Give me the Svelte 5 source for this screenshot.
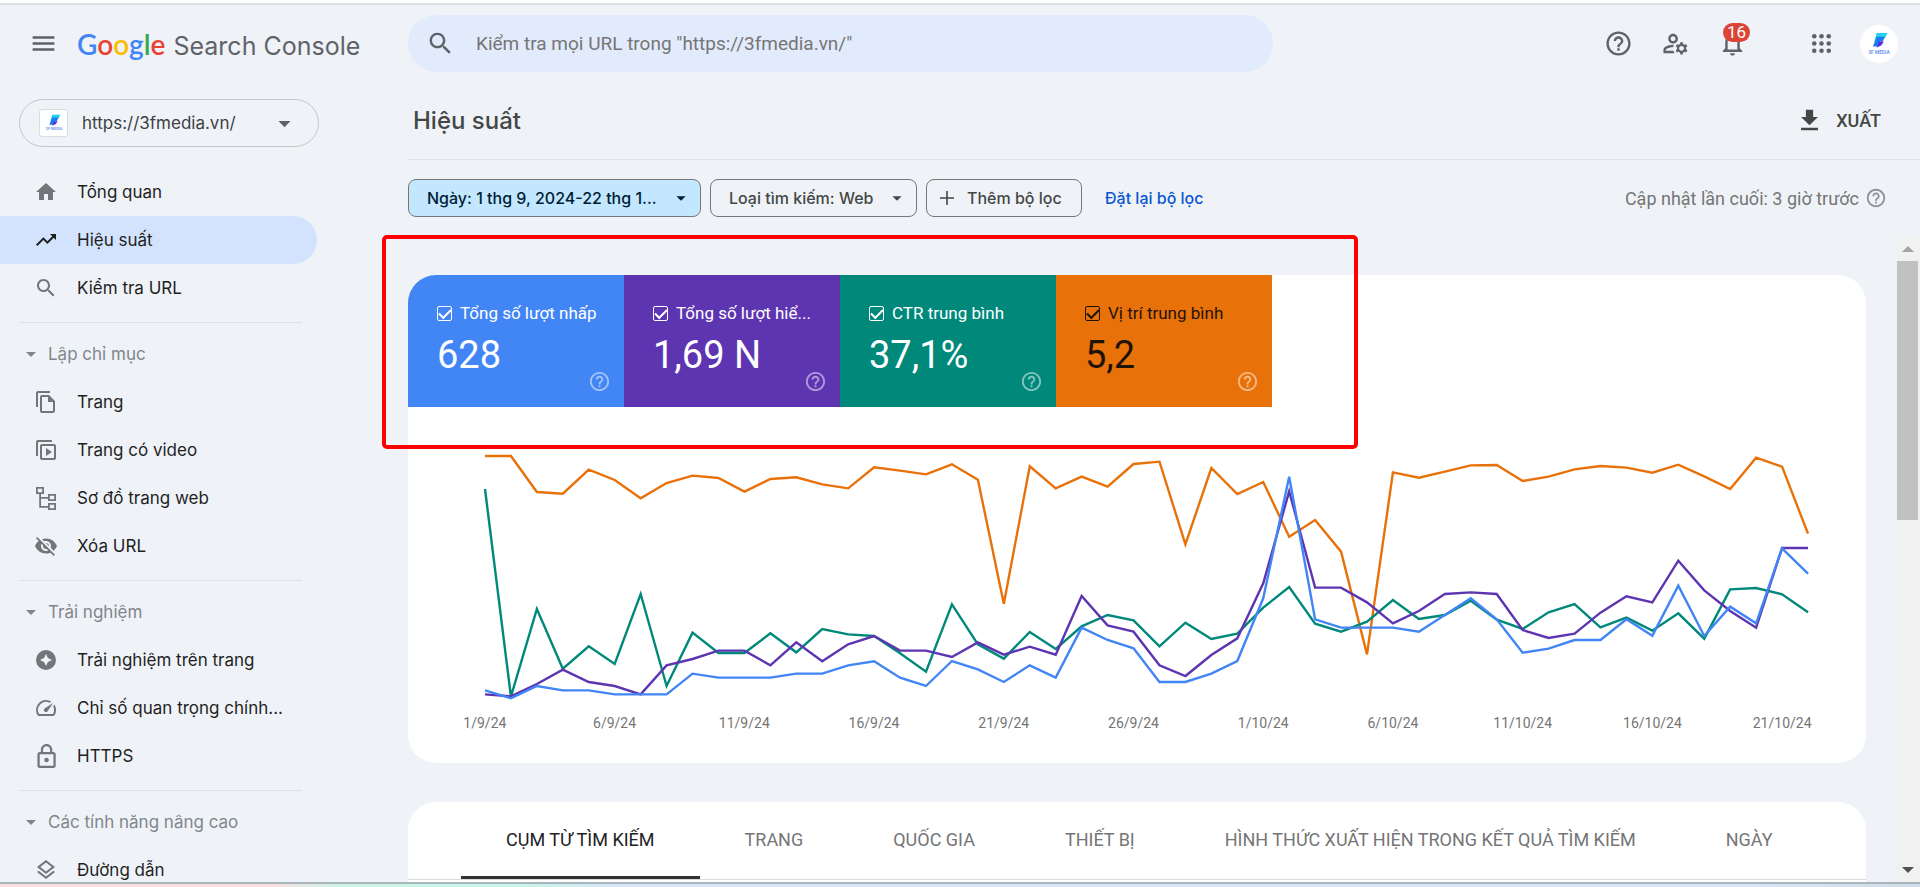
<script lang="ts">
	interface NavItem {
		label: string;
		icon: string;
		box?: string;
		active?: boolean;
	}
	interface NavGroup {
		title?: string;
		items: NavItem[];
	}

	const icons: Record<string, string> = {
		menu: 'M3 18h18v-2H3v2zm0-5h18v-2H3v2zm0-7v2h18V6H3z',
		search:
			'M15.5 14h-.79l-.28-.27C15.41 12.59 16 11.11 16 9.5 16 5.91 13.09 3 9.5 3S3 5.91 3 9.5 5.91 16 9.5 16c1.61 0 3.09-.59 4.23-1.57l.27.28v.79l5 4.99L20.49 19l-4.99-5zm-6 0C7.01 14 5 11.99 5 9.5S7.01 5 9.5 5 14 7.01 14 9.5 11.99 14 9.5 14z',
		help: 'M11 18h2v-2h-2v2zm1-16C6.48 2 2 6.48 2 12s4.48 10 10 10 10-4.48 10-10S17.52 2 12 2zm0 18c-4.41 0-8-3.59-8-8s3.59-8 8-8 8 3.59 8 8-3.59 8-8 8zm0-14c-2.21 0-4 1.79-4 4h2c0-1.1.9-2 2-2s2 .9 2 2c0 2-3 1.75-3 5h2c0-2.25 3-2.5 3-5 0-2.21-1.79-4-4-4z',
		accounts:
			'M4 18v-.65c0-.34.16-.66.41-.81C6.1 15.53 8.03 15 10 15c.03 0 .05 0 .08.01.1-.7.3-1.37.59-1.98-.22-.02-.44-.03-.67-.03-2.42 0-4.68.67-6.61 1.82-.88.52-1.39 1.5-1.39 2.53V20h9.26c-.42-.6-.75-1.28-.97-2H4zm6-6c2.21 0 4-1.79 4-4s-1.79-4-4-4-4 1.79-4 4 1.79 4 4 4zm0-6c1.1 0 2 .9 2 2s-.9 2-2 2-2-.9-2-2 .9-2 2-2zm10.75 10c0-.22-.03-.42-.06-.63l1.14-1.01-1-1.73-1.45.49c-.32-.27-.68-.48-1.08-.63L18 11h-2l-.3 1.49c-.4.15-.76.36-1.08.63l-1.45-.49-1 1.73 1.14 1.01c-.03.21-.06.41-.06.63s.03.42.06.63l-1.14 1.01 1 1.73 1.45-.49c.32.27.68.48 1.08.63L16 21h2l.3-1.49c.4-.15.76-.36 1.08-.63l1.45.49 1-1.73-1.14-1.01c.03-.21.06-.41.06-.63zM17 18c-1.1 0-2-.9-2-2s.9-2 2-2 2 .9 2 2-.9 2-2 2z',
		bell: 'M12 22c1.1 0 2-.9 2-2h-4c0 1.1.9 2 2 2zm6-6v-5c0-3.07-1.63-5.64-4.5-6.32V4c0-.83-.67-1.5-1.5-1.5s-1.5.67-1.5 1.5v.68C7.64 5.36 6 7.92 6 11v5l-2 2v1h16v-1l-2-2zm-2 1H8v-6c0-2.48 1.51-4.5 4-4.5s4 2.02 4 4.5v6z',
		download: 'M19 9h-4V3H9v6H5l7 7 7-7zM5 18v2h14v-2H5z',
		plus: 'M19 12.8h-6.2V19h-1.6v-6.2H5v-1.6h6.2V5h1.6v6.2H19z',
		caret: 'M7 10l5 5 5-5z',
		home: 'M10 20v-6h4v6h5v-8h3L12 3 2 12h3v8z',
		trend: 'M16 6l2.29 2.29-4.88 4.88-4-4L2 16.59 3.41 18l6-6 4 4 6.3-6.29L22 12V6z',
		pages:
			'M16 1H4c-1.1 0-2 .9-2 2v14h2V3h12zM15 5l6 6v10c0 1.1-.9 2-2 2H8c-1.1 0-2-.9-2-2V7c0-1.1.9-2 2-2zM8 7v14h11v-9h-5V7z',
		video:
			'M4 18H2V4c0-1.1.9-2 2-2h14v2H4zM20 6H8c-1.1 0-2 .9-2 2v12c0 1.1.9 2 2 2h12c1.1 0 2-.9 2-2V8c0-1.1-.9-2-2-2zm0 14H8V8h12zM12 10v8l6-4z',
		sitemap:
			'M2 1h8v7H7v3h7V8h8v7h-8v-2.2H7V20h7v-3h8v7h-8v-2.2H5.2V8H2zM3.8 2.8v3.4h4.4V2.8zM15.8 9.8v3.4h4.4V9.8zM15.8 18.8v3.4h4.4v-3.4z',
		hidden:
			'M12 7c2.76 0 5 2.24 5 5 0 .65-.13 1.26-.36 1.83l2.92 2.92c1.51-1.26 2.7-2.89 3.43-4.75-1.73-4.39-6-7.5-11-7.5-1.4 0-2.74.25-3.98.7l2.16 2.16C10.74 7.13 11.35 7 12 7zM2 4.27l2.28 2.28.46.46C3.08 8.3 1.78 10.02 1 12c1.73 4.39 6 7.5 11 7.5 1.55 0 3.03-.3 4.38-.84l.42.42L19.73 22 21 20.73 3.27 3 2 4.27zM7.53 9.8l1.55 1.55c-.05.21-.08.43-.08.65 0 1.66 1.34 3 3 3 .22 0 .44-.03.65-.08l1.55 1.55c-.67.33-1.41.53-2.2.53-2.76 0-5-2.24-5-5 0-.79.2-1.53.53-2.2zm4.31-.78l3.15 3.15.02-.16c0-1.66-1.34-3-3-3l-.17.01z',
		experience:
			'M12 2a10 10 0 1 0 0 20 10 10 0 0 0 0-20zm0 4l1.9 4.1L18 12l-4.1 1.9L12 18l-1.9-4.1L6 12l4.1-1.9z',
		speed:
			'M20.38 8.57l-1.23 1.85a8 8 0 0 1-.22 7.58H5.07A8 8 0 0 1 15.58 6.85l1.85-1.23A10 10 0 0 0 3.35 19a2 2 0 0 0 1.72 1h13.85a2 2 0 0 0 1.74-1 10 10 0 0 0-.27-10.44zm-9.79 6.84a2 2 0 0 0 2.83 0l5.66-8.49-8.49 5.66a2 2 0 0 0 0 2.83z',
		lock: 'M12 17c1.1 0 2-.9 2-2s-.9-2-2-2-2 .9-2 2 .9 2 2 2zm6-9h-1V6c0-2.76-2.24-5-5-5S7 3.24 7 6v2H6c-1.1 0-2 .9-2 2v10c0 1.1.9 2 2 2h12c1.1 0 2-.9 2-2V10c0-1.1-.9-2-2-2zM8.9 6c0-1.71 1.39-3.1 3.1-3.1s3.1 1.39 3.1 3.1v2H8.9V6zM18 20H6V10h12v10z',
		layers:
			'M11.99 18.54l-7.37-5.73L3 14.07l9 7 9-7-1.63-1.27zM12 16l7.36-5.73L21 9l-9-7-9 7 1.63 1.27L12 16zm0-11.47L17.74 9 12 13.47 6.26 9 12 4.53z'
	};

	const groups: NavGroup[] = [
		{
			items: [
				{ label: 'Tổng quan', icon: 'home' },
				{ label: 'Hiệu suất', icon: 'trend', active: true },
				{ label: 'Kiểm tra URL', icon: 'search' }
			]
		},
		{
			title: 'Lập chỉ mục',
			items: [
				{ label: 'Trang', icon: 'pages' },
				{ label: 'Trang có video', icon: 'video' },
				{ label: 'Sơ đồ trang web', icon: 'sitemap' },
				{ label: 'Xóa URL', icon: 'hidden' }
			]
		},
		{
			title: 'Trải nghiệm',
			items: [
				{ label: 'Trải nghiệm trên trang', icon: 'experience' },
				{ label: 'Chỉ số quan trọng chính...', icon: 'speed' },
				{ label: 'HTTPS', icon: 'lock', box: '1 1 21 21' }
			]
		},
		{
			title: 'Các tính năng nâng cao',
			items: [{ label: 'Đường dẫn', icon: 'layers' }]
		}
	];

	const metrics = [
		{ id: 'clicks', label: 'Tổng số lượt nhấp', value: '628' },
		{ id: 'impressions', label: 'Tổng số lượt hiể...', value: '1,69 N' },
		{ id: 'ctr', label: 'CTR trung bình', value: '37,1%' },
		{ id: 'position', label: 'Vị trí trung bình', value: '5,2' }
	];

	// one value per day, measured down from the top of the plot
	const series = [
		{
			id: 'position',
			values: [
				48, 48, 156, 161, 89, 120, 175, 129, 107, 114, 155, 117, 112, 133, 145, 82, 92, 103, 73, 119,
				491, 79, 145, 110, 140, 72, 65, 313, 84, 162, 126, 290, 240, 335, 643, 97, 113, 95, 76, 75,
				123, 110, 88, 78, 83, 98, 74, 109, 147, 53, 80, 281
			]
		},
		{
			id: 'ctr',
			values: [
				147, 770, 507, 686, 619, 672, 462, 738, 578, 639, 639, 580, 637, 567, 583, 588, 640, 695, 493,
				613, 656, 576, 627, 559, 525, 541, 619, 548, 597, 581, 503, 441, 551, 575, 545, 480, 537, 525,
				482, 539, 567, 517, 492, 562, 533, 572, 520, 596, 448, 444, 463, 517
			]
		},
		{
			id: 'impressions',
			values: [
				763, 769, 732, 689, 726, 738, 763, 676, 657, 632, 632, 676, 607, 664, 613, 588, 632, 632, 651,
				607, 644, 620, 644, 468, 556, 575, 676, 708, 645, 595, 430, 154, 443, 443, 487, 550, 513, 462,
				457, 462, 570, 594, 581, 518, 469, 487, 362, 451, 513, 563, 324, 324
			]
		},
		{
			id: 'clicks',
			values: [
				751, 775, 738, 751, 751, 763, 763, 763, 701, 713, 713, 713, 701, 701, 676, 664, 713, 738, 663,
				688, 726, 676, 713, 563, 600, 625, 726, 726, 701, 663, 475, 110, 538, 563, 563, 563, 575, 525,
				475, 538, 638, 626, 600, 600, 538, 587, 437, 588, 500, 550, 325, 401
			]
		}
	];

	const dates = [
		'1/9/24',
		'6/9/24',
		'11/9/24',
		'16/9/24',
		'21/9/24',
		'26/9/24',
		'1/10/24',
		'6/10/24',
		'11/10/24',
		'16/10/24',
		'21/10/24'
	];

	const tabs = [
		'CỤM TỪ TÌM KIẾM',
		'TRANG',
		'QUỐC GIA',
		'THIẾT BỊ',
		'HÌNH THỨC XUẤT HIỆN TRONG KẾT QUẢ TÌM KIẾM',
		'NGÀY'
	];
	let activeTab = $state(0);

	const toPoints = (values: number[]) => values.map((v, i) => `${i},${v}`).join(' ');
</script>

{#snippet icon(name: string, size: number, box = '0 0 24 24')}
	<svg class="icon" width={size} height={size} viewBox={box} aria-hidden="true">
		<path d={icons[name]} fill="currentColor" fill-rule="evenodd" />
	</svg>
{/snippet}

{#snippet brand(size: number)}
	<svg class="icon" width={size} height={size} viewBox="0 0 28 28" aria-hidden="true">
		<path d="M12 5h9l-2 4h-5l-4 4z" fill="#22d3ee" />
		<path d="M9 16l3-8h7l-2 4h-2l-2 4H9z" fill="#1d7bf0" />
		<path d="M14 12h4l-2 3-4 2z" fill="#5b2be0" />
		<text x="14" y="22" text-anchor="middle" class="brand-text">3F MEDIA</text>
	</svg>
{/snippet}

<div class="app">
	<header class="topbar">
		<div class="logo-area">
			<button class="icon-btn" aria-label="Menu">{@render icon('menu', 29)}</button>
			<a class="logo" href="#home">
				<span class="google"
					><span class="b">G</span><span class="r">o</span><span class="y">o</span><span class="b"
						>g</span
					><span class="g">l</span><span class="r">e</span></span
				>
				<span class="product">Search Console</span>
			</a>
		</div>
		<label class="search">
			{@render icon('search', 29)}
			<input
				type="text"
				aria-label="Kiểm tra URL"
				placeholder={'Kiểm tra mọi URL trong "https://3fmedia.vn/"'}
			/>
		</label>
		<div class="actions">
			<button class="icon-btn" aria-label="Trợ giúp">{@render icon('help', 29)}</button>
			<button class="icon-btn" aria-label="Người dùng">{@render icon('accounts', 29)}</button>
			<button class="icon-btn bell" aria-label="Thông báo">
				{@render icon('bell', 29)}
				<span class="badge">16</span>
			</button>
			<button class="icon-btn apps" aria-label="Ứng dụng">
				<svg class="icon" width="29" height="29" viewBox="0 0 24 24" aria-hidden="true">
					{#each [6, 12, 18] as cy}
						{#each [6, 12, 18] as cx}
							<circle {cx} {cy} r="1.9" fill="currentColor" />
						{/each}
					{/each}
				</svg>
			</button>
		</div>
		<button class="avatar" aria-label="Tài khoản">{@render brand(34)}</button>
	</header>

	<div class="body">
		<aside class="sidebar">
			<label class="property">
				<span class="favicon">{@render brand(26)}</span>
				<select aria-label="Trang web">
					<option>https://3fmedia.vn/</option>
				</select>
				{@render icon('caret', 29)}
			</label>
			<nav>
				{#each groups as group}
					{#if group.title}
						<hr />
						<button class="group-title">
							{@render icon('caret', 24)}
							{group.title}
						</button>
					{/if}
					{#each group.items as item}
						<a class="nav-item" class:active={item.active} href="#{item.icon}">
							{@render icon(item.icon, 24, item.box)}
							{item.label}
						</a>
					{/each}
				{/each}
			</nav>
		</aside>

		<main>
			<div class="title-row">
				<h1>Hiệu suất</h1>
				<button class="export">{@render icon('download', 29)}XUẤT</button>
			</div>

			<div class="filters">
				<label class="chip selected">
					<select aria-label="Ngày">
						<option>Ngày: 1 thg 9, 2024-22 thg 1...</option>
					</select>
					{@render icon('caret', 22)}
				</label>
				<label class="chip">
					<select aria-label="Loại tìm kiếm">
						<option>Loại tìm kiếm: Web</option>
					</select>
					{@render icon('caret', 22)}
				</label>
				<button class="chip add">{@render icon('plus', 24)}Thêm bộ lọc</button>
				<a class="reset" href="#reset">Đặt lại bộ lọc</a>
				<span class="updated">
					Cập nhật lần cuối: 3 giờ trước
					{@render icon('help', 22)}
				</span>
			</div>

			<div class="scroll">
				<div class="content">
					<section class="card performance">
						<div class="metrics">
							{#each metrics as metric}
								<div class="metric {metric.id}">
									<label>
										<input type="checkbox" checked />
										{metric.label}
									</label>
									<strong>{metric.value}</strong>
									<button class="metric-help" aria-label="Trợ giúp: {metric.label}">
										{@render icon('help', 23)}
									</button>
								</div>
							{/each}
						</div>
						<svg class="plot" viewBox="0 0 51 780" preserveAspectRatio="none" aria-hidden="true">
							{#each series as line}
								<polyline class={line.id} points={toPoints(line.values)} />
							{/each}
						</svg>
						<div class="axis">
							{#each dates as date}
								<span>{date}</span>
							{/each}
						</div>
						<div class="highlight"></div>
					</section>

					<section class="card queries">
						<div class="tabs" role="tablist">
							{#each tabs as tab, i}
								<button
									role="tab"
									aria-selected={i === activeTab}
									class:active={i === activeTab}
									onclick={() => (activeTab = i)}
								>
									{tab}
								</button>
							{/each}
						</div>
					</section>
				</div>
				<div class="scrollbar" aria-hidden="true">
					<span class="arrow up"></span>
					<span class="thumb"></span>
					<span class="arrow down"></span>
				</div>
			</div>
		</main>
	</div>
	<div class="edge"></div>
</div>

<style>
	:global(body) {
		margin: 0;
	}
	.app {
		--sans: Inter, 'Noto Sans', sans-serif;
		--roboto: Roboto, 'Noto Sans', sans-serif;
		display: flex;
		flex-direction: column;
		height: 100vh;
		overflow: hidden;
		box-sizing: border-box;
		border-top: 3px solid #fff;
		background: #eff3f8;
		color: #1f1f1f;
		font-family: var(--roboto);
		font-size: 16px;
	}
	.app :global(*) {
		box-sizing: border-box;
	}
	button,
	select,
	input {
		margin: 0;
		padding: 0;
		border: 0;
		background: none;
		font: inherit;
		color: inherit;
	}
	select {
		appearance: none;
		flex: 1;
		min-width: 0;
		outline: none;
	}
	a {
		text-decoration: none;
		color: inherit;
	}
	.icon {
		display: block;
		flex: none;
	}

	/* top bar */
	.topbar {
		display: flex;
		align-items: center;
		flex: none;
		height: 79px;
		padding-right: 22px;
		border-top: 2px solid #dddfe0;
		color: #5f6368;
	}
	.logo-area {
		display: flex;
		align-items: center;
		gap: 19px;
		flex: none;
		width: 408px;
		padding-left: 29px;
	}
	.logo {
		display: flex;
		align-items: baseline;
		gap: 8px;
		padding-top: 2px;
	}
	.google {
		font-family: Lato, sans-serif;
		font-size: 28px;
		font-weight: 600;
		line-height: 36px;
	}
	.b {
		color: #4285f4;
	}
	.r {
		color: #ea4335;
	}
	.y {
		color: #fbbc04;
	}
	.g {
		color: #34a853;
	}
	.product {
		font-family: var(--sans);
		font-size: 25px;
		line-height: 36px;
	}
	.search {
		display: flex;
		align-items: center;
		gap: 21px;
		flex: 0 1 865px;
		height: 57px;
		padding: 0 18px;
		border-radius: 28px;
		background: #e2ebfc;
	}
	.search input {
		flex: 1;
		min-width: 0;
		font-size: 19px;
		outline: none;
	}
	.search input::placeholder {
		color: #757575;
		opacity: 1;
	}
	.actions {
		display: flex;
		align-items: center;
		gap: 28px;
		margin: 0 24px 0 auto;
	}
	.bell {
		position: relative;
	}
	.badge {
		position: absolute;
		top: -6px;
		left: 5px;
		width: 27px;
		border-radius: 10px;
		background: #db4437;
		color: #fff;
		font-size: 17px;
		line-height: 19px;
		text-align: center;
	}
	.apps {
		margin-left: 32px;
	}
	.avatar {
		display: grid;
		place-items: center;
		width: 38px;
		height: 38px;
		border-radius: 50%;
		background: #fff;
	}
	.brand-text {
		font-family: var(--roboto);
		font-size: 4px;
		font-weight: 700;
		fill: #6f9bf0;
	}

	/* sidebar */
	.body {
		display: flex;
		flex: 1;
		min-height: 0;
	}
	.sidebar {
		flex: none;
		width: 408px;
		padding-top: 17px;
		overflow: hidden;
		font-family: var(--sans);
		font-size: 17px;
	}
	.property {
		display: flex;
		align-items: center;
		gap: 14px;
		width: 300px;
		height: 48px;
		margin: 0 0 21px 19px;
		padding: 0 19px;
		border: 1px solid #c4c7c5;
		border-radius: 24px;
		color: #3c4043;
	}
	.property > .icon {
		color: #5f6368;
	}
	.favicon {
		display: grid;
		place-items: center;
		width: 29px;
		height: 28px;
		border: 1px solid #dadce0;
		border-radius: 3px;
		background: #fff;
	}
	hr {
		width: 283px;
		height: 1px;
		margin: 10px 0 7px 19px;
		border: 0;
		background: #dfe1e3;
	}
	.group-title {
		display: flex;
		align-items: center;
		gap: 5px;
		height: 48px;
		padding-left: 19px;
		color: #80868b;
	}
	.nav-item {
		display: flex;
		align-items: center;
		gap: 19px;
		width: 317px;
		height: 48px;
		padding-left: 34px;
		border-radius: 0 24px 24px 0;
		white-space: nowrap;
	}
	.nav-item .icon {
		color: #737679;
	}
	.nav-item.active {
		background: #d3e3fd;
	}
	.nav-item.active .icon {
		color: #1f1f1f;
	}

	/* page heading and filters */
	main {
		display: flex;
		flex-direction: column;
		flex: 1;
		min-width: 0;
	}
	.title-row {
		display: flex;
		align-items: center;
		justify-content: space-between;
		flex: none;
		height: 78px;
		padding: 0 39px 0 5px;
		border-bottom: 1px solid #dfe1e3;
		color: #444746;
	}
	h1 {
		margin: 0;
		font-family: var(--sans);
		font-size: 24px;
		font-weight: 500;
		line-height: 32px;
	}
	.export {
		display: flex;
		align-items: center;
		gap: 12px;
		font-size: 18px;
		font-weight: 500;
	}
	.filters {
		display: flex;
		align-items: center;
		gap: 9px;
		flex: none;
		height: 76px;
		padding-right: 33px;
		font-family: var(--sans);
	}
	.chip {
		display: flex;
		align-items: center;
		width: 207px;
		height: 38px;
		padding: 0 8px 0 18px;
		border: 1px solid #747775;
		border-radius: 8px;
		color: #444746;
		font-size: 16px;
		font-weight: 500;
		white-space: nowrap;
	}
	.chip.selected {
		width: 293px;
		background: #c2e7ff;
		color: #001d35;
	}
	.chip.add {
		gap: 8px;
		width: 156px;
		padding: 0 8px;
	}
	.reset {
		margin-left: 14px;
		color: #0b57d0;
		font-size: 16px;
		font-weight: 500;
	}
	.updated {
		display: flex;
		align-items: center;
		gap: 6px;
		margin-left: auto;
		color: #757575;
		font-family: var(--roboto);
		font-size: 18px;
	}
	.updated .icon {
		color: #8f9294;
	}

	/* scrolling area */
	.scroll {
		display: flex;
		flex: 1;
		min-height: 0;
	}
	.content {
		flex: 1;
		min-width: 0;
		padding: 39px 29px 0 0;
	}
	.card {
		margin-bottom: 39px;
		border-radius: 28px;
		background: #fff;
	}
	.performance {
		position: relative;
		padding-bottom: 29px;
	}
	.metrics {
		display: flex;
	}
	.metric {
		display: flex;
		flex-direction: column;
		width: 216px;
		height: 132px;
		padding: 28px 13px 0 29px;
		color: #fff;
	}
	.metric label {
		display: flex;
		align-items: center;
		gap: 8px;
		font-size: 17px;
		line-height: 21px;
		white-space: nowrap;
	}
	.metric input {
		appearance: none;
		display: grid;
		place-items: center;
		flex: none;
		width: 15px;
		height: 15px;
		border: 1px solid currentColor;
		border-radius: 2px;
	}
	.metric input:checked::after {
		content: '';
		width: 10px;
		height: 5px;
		margin-bottom: 3px;
		border: solid currentColor;
		border-width: 0 0 2px 2px;
		transform: rotate(-45deg);
	}
	.metric strong {
		margin-top: 11px;
		font-size: 38px;
		font-weight: 400;
		line-height: 40px;
	}
	.metric-help {
		align-self: flex-end;
		margin-top: -5px;
		color: rgba(255, 255, 255, 0.5);
	}
	.metric.clicks {
		border-top-left-radius: 28px;
		background: #4285f4;
	}
	.metric.impressions {
		background: #5e35b1;
	}
	.metric.ctr {
		background: #00897b;
	}
	.metric.position {
		background: #e8710a;
		color: #1f1308;
	}
	.plot {
		display: block;
		width: calc(100% - 135px);
		height: 260px;
		margin: 33px 58px 0 77px;
		overflow: visible;
	}
	.plot polyline {
		fill: none;
		stroke-width: 2.4;
		vector-effect: non-scaling-stroke;
	}
	.plot .clicks {
		stroke: #4285f4;
	}
	.plot .impressions {
		stroke: #5e35b1;
	}
	.plot .ctr {
		stroke: #00897b;
	}
	.plot .position {
		stroke: #e8710a;
	}
	.axis {
		display: grid;
		grid-template-columns: repeat(11, 1fr);
		margin-top: 13px;
		padding: 0 19px 0 12px;
		color: #757575;
		font-size: 14px;
		line-height: 21px;
		text-align: center;
	}
	.highlight {
		position: absolute;
		top: -40px;
		left: -26px;
		width: 976px;
		height: 214px;
		border: 4px solid #f00;
		border-radius: 5px;
		pointer-events: none;
	}
	.queries {
		min-height: 400px;
	}
	.tabs {
		display: flex;
		height: 78px;
		padding-left: 53px;
		border-bottom: 1px solid #dadce0;
	}
	.tabs button {
		padding: 0 45px;
		border-bottom: 3px solid transparent;
		color: #757575;
		font-size: 18px;
		white-space: nowrap;
	}
	.tabs button.active {
		border-bottom-color: #333;
		color: #202124;
	}

	/* scrollbar */
	.scrollbar {
		display: flex;
		flex-direction: column;
		align-items: center;
		flex: none;
		width: 25px;
		background: #f1f1f1;
	}
	.thumb {
		width: 21px;
		height: 259px;
		margin-top: 9px;
		background: #c1c1c1;
	}
	.arrow {
		border: 6px solid transparent;
	}
	.arrow.up {
		margin-top: 4px;
		border-bottom-color: #a3a3a3;
	}
	.arrow.down {
		margin: auto 0 3px;
		border-top-color: #505050;
	}

	/* strip along the bottom of the window */
	.edge {
		position: relative;
		flex: none;
		height: 5px;
		border-top: 2px solid #a9b5bd;
		background: linear-gradient(90deg, #fadfe0 0 14%, #c8f5e6 18% 27%, #d8e6f5 32% 90%, #d3dce8);
	}
</style>
